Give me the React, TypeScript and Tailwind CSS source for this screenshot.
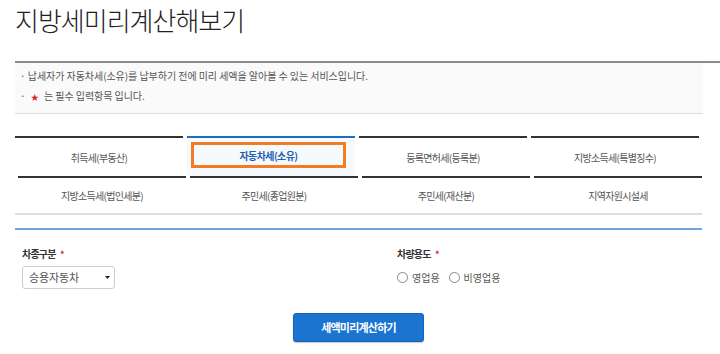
import React from "react";

const row1 = ["취득세(부동산)", "자동차세(소유)", "등록면허세(등록분)", "지방소득세(특별징수)"];
const row2 = ["지방소득세(법인세분)", "주민세(종업원분)", "주민세(재산분)", "지역자원시설세"];

export default function App() {
  return (
    <div className="w-[720px] h-[354px] overflow-hidden bg-white font-['Noto_Sans_CJK_KR',sans-serif] text-[#555]">
      <h1 className="pl-[15px] pt-[3px] h-[61px] text-[26px] leading-[34px] tracking-[-1px] text-[#222] font-light">
        지방세미리계산해보기
      </h1>
      <div className="ml-[15px] border-t-2 border-[#8c8c8c]">
        <div className="w-[688px] h-[51px] bg-[#fafafa] border-b border-[#dcdcdc] pt-[3px] pl-[5px] text-[10px] leading-[20px] tracking-[-0.05px] text-[#555]">
          <p>· 납세자가 자동차세(소유)를 납부하기 전에 미리 세액을 알아볼 수 있는 서비스입니다.</p>
          <p>
            · <span className="text-[#e0201c] text-[8px] mx-[3px]">★</span> 는 필수 입력항목 입니다.
          </p>
        </div>
      </div>

      <div className="mt-[22px] ml-[15px] w-[684px] grid grid-cols-4 gap-x-[4px]">
        {row1.map((t, i) =>
          i === 1 ? (
            <div key={t} className="border-t-2 border-[#1a6fc4] bg-[#f6f9fe] h-[40px] pt-[4px] pl-[4px]">
              <div className="w-[155px] h-[26px] border-[3px] border-[#f47b20] flex items-center justify-center text-[10px] font-bold text-[#1f5fae] tracking-[-0.6px]">
                {t}
              </div>
            </div>
          ) : (
            <div key={t} className="border-t-2 border-[#333] h-[40px] flex items-center justify-center text-[10px] tracking-[-0.7px] text-[#555]">
              {t}
            </div>
          )
        )}
      </div>
      <div className="ml-[18px] w-[684px] grid grid-cols-4 gap-x-[4px]">
        {row2.map((t) => (
          <div key={t} className="border-t-2 border-[#333] h-[37px] flex items-center justify-center text-[10px] tracking-[-0.7px] text-[#555]">
            {t}
          </div>
        ))}
      </div>
      <div className="ml-[15px] w-[687px] h-[2px] bg-[#dedede]" />
      <div className="ml-[15px] mt-[13px] w-[687px] h-[2px] bg-[#6fa6dc]" />

      <div className="ml-[15px] w-[687px]">
        <div className="flex pl-[7px] mt-[17px]">
          <div className="w-[375px]">
            <div className="h-[14px] leading-[14px] text-[10px] font-bold text-[#333] tracking-[-0.8px]">
              차종구분 <span className="text-[#e0201c] text-[9px] ml-[3px]">*</span>
            </div>
            <div className="mt-[5px] w-[93px] h-[23px] border border-[#cfcfcf] rounded-[3px] bg-white flex items-center justify-between pl-[6px] pr-[4px]">
              <span className="text-[11px] text-[#555] tracking-[-0.1px]">승용자동차</span>
              <svg width="5" height="3" viewBox="0 0 5 3">
                <path d="M0 0 L5 0 L2.5 3 Z" fill="#222" />
              </svg>
            </div>
          </div>
          <div>
            <div className="h-[14px] leading-[14px] text-[10px] font-bold text-[#333] tracking-[-0.8px]">
              차량용도 <span className="text-[#e0201c] text-[9px] ml-[3px]">*</span>
            </div>
            <div className="mt-[5px] h-[23px] flex items-center text-[10px] text-[#555]">
              <span className="w-[11px] h-[11px] rounded-full border border-[#888] bg-white" />
              <span className="ml-[4px]">영업용</span>
              <span className="ml-[9px] w-[11px] h-[11px] rounded-full border border-[#888] bg-white" />
              <span className="ml-[4px]">비영업용</span>
            </div>
          </div>
        </div>
        <div className="flex justify-center mt-[24px]">
          <button className="w-[131px] h-[29px] bg-[#1a74d0] border border-[#1561b3] rounded-[3px] text-white text-[11px] font-bold tracking-[-0.8px] shadow-[0_1px_1px_rgba(0,0,0,0.2)]">
            세액미리계산하기
          </button>
        </div>
      </div>
    </div>
  );
}
